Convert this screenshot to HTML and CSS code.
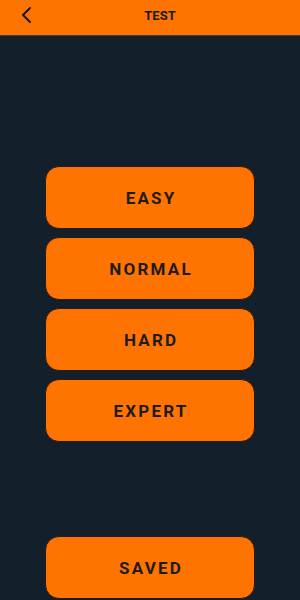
FILE: index.html
```html
<!DOCTYPE html>
<html>
<head>
<meta charset="utf-8">
<link rel="stylesheet" href="styles.css">
</head>
<body>
<div class="app">
  <header class="topbar">
    <span class="back">
      <svg width="12" height="16" viewBox="0 0 12 16"><path d="M10 1 L3 8 L10 15" fill="none" stroke="#111" stroke-width="1.8" stroke-linecap="round" stroke-linejoin="round"/></svg>
    </span>
    <span class="title">TEST</span>
  </header>
  <main class="content">
    <div class="levels">
      <button class="btn">EASY</button>
      <button class="btn">NORMAL</button>
      <button class="btn">HARD</button>
      <button class="btn">EXPERT</button>
    </div>
    <button class="btn saved">SAVED</button>
  </main>
</div>
</body>
</html>
```
FILE: styles.css
```css
html, body {
  margin: 0;
  padding: 0;
  background: #13202c;
}
.app {
  width: 300px;
  height: 600px;
  display: flex;
  flex-direction: column;
  font-family: Roboto, "Liberation Sans", sans-serif;
  overflow: hidden;
}
.topbar {
  height: 35px;
  background: #ff7300;
  border-bottom: 1px solid #3b3f43;
  display: flex;
  align-items: center;
  position: relative;
}
.back {
  width: 20px;
  padding-left: 20px;
  display: flex;
  align-items: center;
  margin-top: -5px;
}
.title {
  position: absolute;
  left: 20px;
  right: 0;
  text-align: center;
  font-weight: 700;
  font-size: 13px;
  color: #1a1a1a;
  margin-top: -5px;
}
.content {
  flex: 1;
  display: flex;
  flex-direction: column;
  align-items: center;
  padding-top: 130px;
}
.levels {
  display: flex;
  flex-direction: column;
  gap: 8px;
}
.btn {
  width: 210px;
  height: 63px;
  background: #ff7300;
  border: 1px solid #2a1a0c;
  border-radius: 14px;
  font-family: Roboto, "Liberation Sans", sans-serif;
  font-weight: 700;
  font-size: 17px;
  letter-spacing: 2.2px;
  color: #1c1c1c;
  padding: 0;
  text-indent: 2.2px;
}
.saved {
  margin-top: auto;
  margin-bottom: 1px;
}
```
